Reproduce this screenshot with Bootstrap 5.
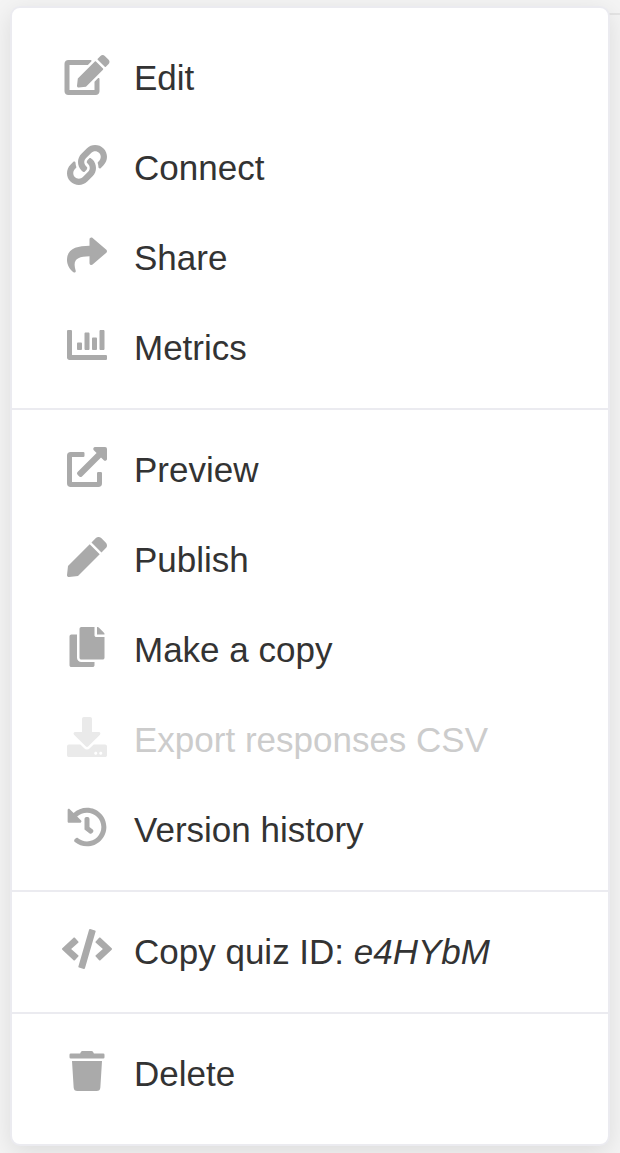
<!DOCTYPE html>
<html lang="en">
<head>
<meta charset="utf-8">
<meta name="viewport" content="width=device-width, initial-scale=1">
<title>Quiz menu</title>
<link href="https://cdn.jsdelivr.net/npm/bootstrap@5.3.0/dist/css/bootstrap.min.css" rel="stylesheet">
<style>
body{background:#f4f4f4;font-family:"Liberation Sans",Arial,sans-serif;font-size:35px;color:#333;height:1153px;overflow:hidden}
.page-rule{top:13px;height:2px;right:0;background:#e4e4e4}
.quiz-menu{width:600px;margin:6px 0 0 10px;border:2px solid #ebebf0;border-radius:10px;box-shadow:0 6px 24px rgba(0,0,0,.1)}
.menu-group{padding:15px 0}
.menu-group:first-child{padding-top:25px}
.menu-group:last-child{padding-bottom:25px}
.menu-group+.menu-group{border-top:2px solid #ebebf0}
.menu-row{height:90px;line-height:90px;padding-left:50px;color:#333;white-space:nowrap}
.menu-row svg{width:50px;height:40px;margin:0 22px 6px 0;fill:#aaa;flex:none}
.menu-row.off{color:#ccc}
.menu-row.off svg{fill:#eaeaea}
</style>
</head>
<body>
<div class="page-rule position-absolute w-50"></div>
<div class="quiz-menu bg-white position-relative">
  <div class="menu-group">
    <a class="menu-row d-flex align-items-center text-decoration-none"><svg viewBox="0 0 576 512"><path d="M402.6 83.2l90.2 90.2c3.8 3.8 3.8 10 0 13.8L274.4 405.6l-92.8 10.3c-12.4 1.4-22.9-9.1-21.5-21.5l10.3-92.8L388.8 83.2c3.8-3.8 10-3.8 13.8 0zm162-22.9l-48.8-48.8c-15.2-15.2-39.9-15.2-55.2 0l-35.4 35.4c-3.8 3.8-3.8 10 0 13.8l90.2 90.2c3.8 3.8 10 3.8 13.8 0l35.4-35.4c15.2-15.3 15.2-40 0-55.2zM384 346.2V448H64V128h229.8c3.2 0 6.2-1.3 8.5-3.5l40-40c7.6-7.6 2.2-20.5-8.5-20.5H48C21.5 64 0 85.5 0 112v352c0 26.5 21.5 48 48 48h352c26.5 0 48-21.5 48-48V306.2c0-10.7-12.9-16-20.5-8.5l-40 40c-2.2 2.3-3.5 5.3-3.5 8.5z"/></svg><span>Edit</span></a>
    <a class="menu-row d-flex align-items-center text-decoration-none"><svg viewBox="0 0 512 512"><path d="M326.612 185.391c59.747 59.809 58.927 155.698.36 214.59-.11.12-.24.25-.36.37l-67.2 67.2c-59.27 59.27-155.699 59.262-214.96 0-59.27-59.26-59.27-155.7 0-214.96l37.106-37.106c9.84-9.84 26.786-3.3 27.294 10.606.648 17.722 3.826 35.527 9.69 52.721 1.986 5.822.567 12.262-3.783 16.612l-13.087 13.087c-28.026 28.026-28.905 73.66-1.155 101.96 28.024 28.579 74.086 28.749 102.325.51l67.2-67.19c28.191-28.191 28.073-73.757 0-101.83-3.701-3.694-7.429-6.564-10.341-8.569a16.037 16.037 0 0 1-6.947-12.606c-.396-10.567 3.348-21.456 11.698-29.806l21.054-21.055c5.521-5.521 14.182-6.199 20.584-1.731a152.482 152.482 0 0 1 20.522 17.197zM467.547 44.449c-59.261-59.262-155.69-59.27-214.96 0l-67.2 67.2c-.12.12-.25.25-.36.37-58.566 58.892-59.387 154.781.36 214.59a152.454 152.454 0 0 0 20.521 17.196c6.402 4.468 15.064 3.789 20.584-1.731l21.054-21.055c8.35-8.35 12.094-19.239 11.698-29.806a16.037 16.037 0 0 0-6.947-12.606c-2.912-2.005-6.64-4.875-10.341-8.569-28.073-28.073-28.191-73.639 0-101.83l67.2-67.19c28.239-28.239 74.3-28.069 102.325.51 27.75 28.3 26.872 73.934-1.155 101.96l-13.087 13.087c-4.35 4.35-5.769 10.79-3.783 16.612 5.864 17.194 9.042 34.999 9.69 52.721.509 13.906 17.454 20.446 27.294 10.606l37.106-37.106c59.271-59.259 59.271-155.699.001-214.959z"/></svg><span>Connect</span></a>
    <a class="menu-row d-flex align-items-center text-decoration-none"><svg viewBox="0 0 512 512"><path d="M503.691 189.836L327.687 37.851C312.281 24.546 288 35.347 288 56.015v80.053C127.371 137.907 0 170.1 0 322.326c0 61.441 39.581 122.309 83.333 154.132 13.653 9.931 33.111-2.533 28.077-18.631C66.066 312.814 132.917 274.316 288 272.085V360c0 20.7 24.3 31.453 39.687 18.164l176.004-152c11.071-9.562 11.086-26.753 0-36.328z"/></svg><span>Share</span></a>
    <a class="menu-row d-flex align-items-center text-decoration-none"><svg viewBox="0 0 512 512"><path d="M332.8 320h38.4c6.4 0 12.8-6.4 12.8-12.8V172.8c0-6.4-6.4-12.8-12.8-12.8h-38.4c-6.4 0-12.8 6.4-12.8 12.8v134.4c0 6.4 6.4 12.8 12.8 12.8zm96 0h38.4c6.4 0 12.8-6.4 12.8-12.8V76.8c0-6.4-6.4-12.8-12.8-12.8h-38.4c-6.4 0-12.8 6.4-12.8 12.8v230.4c0 6.4 6.4 12.8 12.8 12.8zm-288 0h38.4c6.4 0 12.8-6.4 12.8-12.8v-70.4c0-6.4-6.4-12.8-12.8-12.8h-38.4c-6.4 0-12.8 6.4-12.8 12.8v70.4c0 6.4 6.4 12.8 12.8 12.8zm96 0h38.4c6.4 0 12.8-6.4 12.8-12.8V108.8c0-6.4-6.4-12.8-12.8-12.8h-38.4c-6.4 0-12.8 6.4-12.8 12.8v198.4c0 6.4 6.4 12.8 12.8 12.8zM496 384H64V80c0-8.84-7.16-16-16-16H16C7.16 64 0 71.16 0 80v336c0 17.67 14.33 32 32 32h464c8.84 0 16-7.16 16-16v-32c0-8.84-7.16-16-16-16z"/></svg><span>Metrics</span></a>
  </div>
  <div class="menu-group">
    <a class="menu-row d-flex align-items-center text-decoration-none"><svg viewBox="0 0 512 512"><path d="M432 320h-32a16 16 0 0 0-16 16v112H64V128h144a16 16 0 0 0 16-16V80a16 16 0 0 0-16-16H48a48 48 0 0 0-48 48v352a48 48 0 0 0 48 48h352a48 48 0 0 0 48-48V336a16 16 0 0 0-16-16zM488 0H360c-21.37 0-32.05 25.91-17 41l35.73 35.73L135 320.37a24 24 0 0 0 0 34L157.67 377a24 24 0 0 0 34 0l243.61-243.68L471 169c15 15 41 4.5 41-17V24a24 24 0 0 0-24-24z"/></svg><span>Preview</span></a>
    <a class="menu-row d-flex align-items-center text-decoration-none"><svg viewBox="0 0 512 512"><path d="M290.74 93.24l128.02 128.02-277.99 277.99-114.14 12.6C11.35 513.54-1.56 500.62.14 485.34l12.7-114.22 277.9-277.88zm207.2-19.06l-60.11-60.11c-18.75-18.75-49.16-18.75-67.91 0l-56.55 56.55 128.02 128.02 56.55-56.55c18.75-18.76 18.75-49.16 0-67.91z"/></svg><span>Publish</span></a>
    <a class="menu-row d-flex align-items-center text-decoration-none"><svg viewBox="0 0 448 512"><path d="M320 448v40c0 13.255-10.745 24-24 24H24c-13.255 0-24-10.745-24-24V120c0-13.255 10.745-24 24-24h72v296c0 30.879 25.121 56 56 56h168zm0-344V0H152c-13.255 0-24 10.745-24 24v368c0 13.255 10.745 24 24 24h272c13.255 0 24-10.745 24-24V128H344c-13.2 0-24-10.8-24-24zm120.971-31.029L375.029 7.029A24 24 0 0 0 358.059 0H352v96h96v-6.059a24 24 0 0 0-7.029-16.97z"/></svg><span>Make a copy</span></a>
    <a class="menu-row off d-flex align-items-center text-decoration-none" aria-disabled="true"><svg viewBox="0 0 512 512"><path d="M216 0h80c13.3 0 24 10.7 24 24v168h87.7c17.8 0 26.7 21.5 14.1 34.1L269.7 378.3c-7.5 7.5-19.8 7.5-27.3 0L90.1 226.1c-12.6-12.6-3.7-34.1 14.1-34.1H192V24c0-13.3 10.7-24 24-24zm296 376v112c0 13.3-10.7 24-24 24H24c-13.3 0-24-10.7-24-24V376c0-13.3 10.7-24 24-24h146.7l49 49c20.1 20.1 52.5 20.1 72.6 0l49-49H488c13.3 0 24 10.7 24 24zm-124 88c0-11-9-20-20-20s-20 9-20 20 9 20 20 20 20-9 20-20zm64 0c0-11-9-20-20-20s-20 9-20 20 9 20 20 20 20-9 20-20z"/></svg><span>Export responses CSV</span></a>
    <a class="menu-row d-flex align-items-center text-decoration-none"><svg viewBox="0 0 512 512"><path d="M504 255.531c.253 136.64-111.18 248.372-247.82 248.468-59.015.042-113.223-20.53-155.822-54.911-11.077-8.94-11.905-25.541-1.839-35.607l11.267-11.267c8.609-8.609 22.353-9.551 31.891-1.984C173.062 425.135 212.781 440 256 440c101.705 0 184-82.311 184-184 0-101.705-82.311-184-184-184-48.814 0-93.149 18.969-126.068 49.932l50.754 50.754c10.08 10.08 2.941 27.314-11.313 27.314H24c-8.837 0-16-7.163-16-16V38.627c0-14.254 17.234-21.393 27.314-11.314l49.372 49.372C129.209 34.136 189.552 8 256 8c136.81 0 247.747 110.78 248 247.531zm-180.912 78.784l9.823-12.63c8.138-10.463 6.253-25.542-4.21-33.679L288 256.349V152c0-13.255-10.745-24-24-24h-16c-13.255 0-24 10.745-24 24v135.651l65.409 50.874c10.463 8.137 25.541 6.253 33.679-4.21z"/></svg><span>Version history</span></a>
  </div>
  <div class="menu-group">
    <a class="menu-row d-flex align-items-center text-decoration-none"><svg viewBox="0 0 640 512"><path d="M278.9 511.5l-61-17.7c-6.4-1.8-10-8.5-8.2-14.9L346.2 8.7c1.8-6.4 8.5-10 14.9-8.2l61 17.7c6.4 1.8 10 8.5 8.2 14.9L293.8 503.3c-1.9 6.4-8.5 10.1-14.9 8.2zm-114-112.2l43.5-46.4c4.6-4.9 4.3-12.7-.8-17.2L117 256l90.6-79.7c5.1-4.5 5.5-12.3.8-17.2l-43.5-46.4c-4.5-4.8-12.1-5.1-17-.5L3.8 247.2c-5.1 4.7-5.1 12.8 0 17.5l144.1 135.1c4.9 4.6 12.5 4.4 17-.5zm327.2.6l144.1-135.1c5.1-4.7 5.1-12.8 0-17.5L492.1 112.1c-4.8-4.5-12.4-4.3-17 .5L431.6 159c-4.6 4.9-4.3 12.7.8 17.2L523 256l-90.6 79.7c-5.1 4.5-5.5 12.3-.8 17.2l43.5 46.4c4.5 4.9 12.1 5.1 17 .6z"/></svg><span>Copy quiz ID: <em>e4HYbM</em></span></a>
  </div>
  <div class="menu-group">
    <a class="menu-row d-flex align-items-center text-decoration-none"><svg viewBox="0 0 448 512"><path d="M432 32H312l-9.4-18.7A24 24 0 0 0 281.1 0H166.8a23.72 23.72 0 0 0-21.4 13.3L136 32H16A16 16 0 0 0 0 48v32a16 16 0 0 0 16 16h416a16 16 0 0 0 16-16V48a16 16 0 0 0-16-16zM53.2 467a48 48 0 0 0 47.9 45h245.8a48 48 0 0 0 47.9-45L416 128H32z"/></svg><span>Delete</span></a>
  </div>
</div>
<script src="https://cdn.jsdelivr.net/npm/bootstrap@5.3.0/dist/js/bootstrap.bundle.min.js"></script>
</body>
</html>
